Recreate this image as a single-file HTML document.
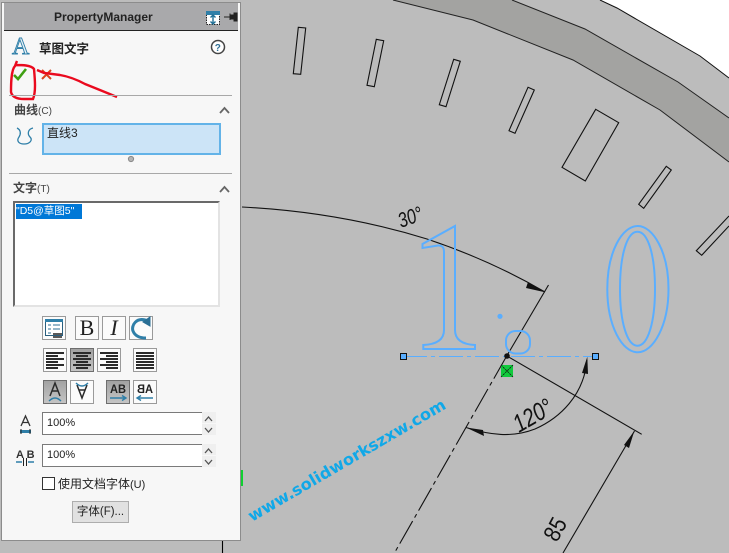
<!DOCTYPE html>
<html><head><meta charset="utf-8"><style>
html,body{margin:0;padding:0;width:729px;height:553px;overflow:hidden;background:#bcbcbc}
body{position:relative;font-family:"Liberation Sans","Noto Sans CJK SC",sans-serif;color:#222}
.a{position:absolute;white-space:nowrap}
.btn{position:absolute;box-sizing:border-box;width:24px;height:24px;border:1px solid #9a9a9a;background:#fbfbfb}
.on{background:linear-gradient(#a2a2a2,#c4c4c4);border-color:#6e6e6e}
.inp{position:absolute;left:42px;width:160px;height:23px;box-sizing:border-box;border:1px solid #7a7a7a;border-right:0;background:#fff;font-size:11px;line-height:21px;padding-left:4px}
.spin{position:absolute;left:202px;width:14px;height:11px;background:#efefef}
</style></head><body>
<svg class="a" style="left:0;top:0" width="729" height="553" viewBox="0 0 729 553">
<polygon points="600,0 617,8 700,56 729,78 729,0" fill="#fff"/>
<polyline points="600,0 617,8 700,56 729,78" fill="none" stroke="#111" stroke-width="1"/>
<polygon points="393,0 473,20 573,60 660,110 729,162 729,118 678,82 585,29 512,0" fill="#a3a3a1"/>
<polyline points="393,0 473,20 573,60 660,110 729,162" fill="none" stroke="#222" stroke-width="1"/>
<polyline points="512,0 585,29 678,82 729,118" fill="none" stroke="#222" stroke-width="1"/>
<g fill="none" stroke="#111" stroke-width="1.1">
<polygon points="298.3,27.3 305.7,28 300.7,74.3 293.3,73.7"/>
<polygon points="376.3,39.3 383.7,40.7 374.3,86.7 367,85.3"/>
<polygon points="453.7,59.3 460.3,61.3 446,106.7 439.3,104.7"/>
<polygon points="528,87.3 534.3,90 515,133.3 509,130.7"/>
<polygon points="595.7,109.3 618.7,122.7 585.3,181 562,167.3"/>
<polygon points="666.3,166.3 671.3,170 643.7,208.3 638.7,204.3"/>
<polyline points="729,216 696.3,250.7 701.7,255.3 729,226"/>
<path d="M242,207 Q340,212 427,239 Q490,260 545,292"/>
<path d="M548.5,285 L506.7,356"/>
<path d="M507,356 L641.7,434.3"/>
<path d="M587,360 C584,395 560,418 535,429 C512,438 490,435 466,427.5"/>
<path d="M634.5,431 L563,553"/>
<path d="M506.7,356 L395,552" stroke-dasharray="26 4 4 4"/>
<path d="M222.5,540 V553" stroke="#000"/>
</g>
<polygon points="545,292.3 528,282 526,288" fill="#111"/>
<polygon points="587.3,356.7 582,373 588,374" fill="#111"/>
<polygon points="466,427.5 483,430 484,436" fill="#111"/>
<polygon points="634.3,431 624,445 629,448" fill="#111"/>
<g fill="#111" font-family="'Liberation Sans',sans-serif">
<text transform="translate(401,228) rotate(-20) scale(.78,1)" font-size="21" font-style="italic">30°</text>
<text transform="translate(519,433) rotate(-30) scale(.8,1)" font-size="25" font-style="italic">120°</text>
<text transform="translate(557,543) rotate(-62) scale(.85,1)" font-size="24">85</text>
</g>
<g fill="none" stroke="#5aaeff" stroke-width="2">
<path d="M455,226 V330 Q455,344 475,345 V349 H423.3 V345 Q444,344 444,330 V252 Q444,245 438,245.5 L422.5,248 V244 Z"/>
<path d="M637.8,226 C653,226 668.5,252 668.5,289 C668.5,326 653,352.3 637.8,352.3 C622,352.3 607.3,326 607.3,289 C607.3,252 622,226 637.8,226 Z"/>
<path d="M637.5,231.7 C648,231.7 655,255 655,288.7 C655,322 648,345.7 637.5,345.7 C627,345.7 620,322 620,288.7 C620,255 627,231.7 637.5,231.7 Z"/>
<rect x="506" y="331" width="24" height="22.5" rx="9.5"/>
</g>
<circle cx="500" cy="316.3" r="2.6" fill="#5aaeff"/>
<path d="M403,356.5 H595" stroke="#5aaeff" stroke-width="1" stroke-dasharray="24 4 4 4" fill="none"/>
<rect x="400.5" y="353.5" width="6" height="6" fill="#5aaeff" stroke="#111"/>
<rect x="592.5" y="353.5" width="6" height="6" fill="#5aaeff" stroke="#111"/>
<circle cx="507" cy="356" r="2.8" fill="#111"/>
<rect x="501" y="365" width="12" height="12" fill="#10c93c"/>
<path d="M501,365 L513,377 M513,365 L501,377" stroke="#111" stroke-width=".8" stroke-dasharray="2 1"/>
<text transform="translate(252,522) rotate(-30.3)" font-family="'DejaVu Sans',sans-serif" font-size="16" font-weight="bold" fill="#10a8e8" textLength="226" lengthAdjust="spacingAndGlyphs">www.solidworkszxw.com</text>
<rect x="241" y="470" width="2" height="16" fill="#10d030"/>
</svg>

<div class="a" style="left:1px;top:2px;width:238px;height:537px;background:#f7f7f7;border:1px solid #8c8c8c"></div>
<div class="a" style="left:4px;top:3px;width:234px;height:27px;background:#a9a9ab;border-bottom:1px solid #222"></div>
<div class="a" style="left:54px;top:10px;font-size:12px;font-weight:bold;color:#222">PropertyManager</div>
<div class="spin" style="top:412px"></div>
<div class="spin" style="top:424px"></div>
<div class="spin" style="top:444px"></div>
<div class="spin" style="top:456px"></div>

<svg class="a" style="left:0;top:0" width="243" height="553" viewBox="0 0 243 553">
<rect x="206.5" y="11.5" width="13" height="13" fill="#fff" stroke="#222" stroke-dasharray="1.5 1"/>
<rect x="206" y="11" width="14" height="4" fill="#2f7fa8"/>
<path d="M213,15 V24 M210.5,17.5 L213,15 L215.5,17.5 M210.5,21.5 L213,24 L215.5,21.5" stroke="#1f6f95" stroke-width="1.4" fill="none"/>
<path d="M224,17 H230 M230,13.5 V20 M230,15 H234 V13 L237,13 V21 L234,21 V19 H230" fill="#222" stroke="#222"/>
<!-- A icon -->
<text x="12" y="54" font-family="'Liberation Serif',serif" font-size="24" fill="#e8f1f6" stroke="#2f7fa8" stroke-width=".9">A</text>
<!-- help -->
<circle cx="218" cy="47" r="6.5" fill="#fff" stroke="#444" stroke-width="1.5"/>
<text x="214.7" y="51" font-family="'Liberation Sans',sans-serif" font-size="10" font-weight="bold" fill="#2f6f95">?</text>
<!-- check, x -->
<path d="M14,75 L18,79 L26,69" stroke="#3f9f12" stroke-width="2.6" fill="none"/>
<path d="M42,70 L51,79 M51,70 L42,79" stroke="#d9441c" stroke-width="2" fill="none"/>
<path d="M17,61 L15,66 C11,70 11,85 11,92 C12,97 17,99 24,99 L33,99 C36,92 35,80 34,69 C31,65 22,65 15,65" stroke="#ea0a1e" stroke-width="2.4" fill="none"/>
<path d="M37,70 L44,73 L60,75 Q72,77 85,84 Q100,90 117,97" stroke="#ea0a1e" stroke-width="2.4" fill="none"/>
<!-- separators -->
<path d="M9,95.5 H232 M9,173.5 H232" stroke="#a8a8a8"/>
<path d="M220,113 L224.5,108 L229,113 M220,192 L224.5,187 L229,192" stroke="#666" stroke-width="1.8" fill="none"/>
<!-- curve icon -->
<path d="M17,128 C21,130 21,134 19,137 C16,141 19,144 24,144 C30,144 33,140 30,137 C27,134 28,129 33,128" stroke="#2f7fa8" stroke-width="1.3" fill="none"/>
<circle cx="131" cy="159" r="2.6" fill="#b4b4b4" stroke="#8a8a8a"/>
</svg>

<div class="a" style="left:39px;top:38px;font-size:12.5px;font-weight:bold;color:#222">草图文字</div>
<div class="a" style="left:14px;top:101px;font-size:12px;font-weight:bold;color:#444">曲线<span style="font-weight:normal;font-size:10px">(C)</span></div>
<div class="a" style="left:42px;top:123px;width:175px;height:28px;background:#cce4f7;border:2px solid #63b3e8"></div>
<div class="a" style="left:47px;top:124px;font-size:12px;color:#222">直线3</div>
<div class="a" style="left:13px;top:179px;font-size:12px;font-weight:bold;color:#444">文字<span style="font-weight:normal;font-size:10px">(T)</span></div>
<div class="a" style="left:13px;top:201px;width:203px;height:102px;background:#fff;border:2px solid;border-color:#696969 #e3e3e3 #e3e3e3 #696969"></div>
<div class="a" style="left:16px;top:204px;width:66px;height:15px;background:#0078d7;color:#fff;font-size:10.5px;line-height:15px">"D5@草图5"</div>

<div class="btn" style="left:42px;top:316px"></div>
<div class="btn" style="left:75px;top:316px;font:22px/22px 'Liberation Serif',serif;text-align:center">B</div>
<div class="btn" style="left:102px;top:316px;font:italic 22px/22px 'Liberation Serif',serif;text-align:center">I</div>
<div class="btn" style="left:129px;top:316px"></div>
<div class="btn" style="left:43px;top:348px"></div>
<div class="btn on" style="left:70px;top:348px"></div>
<div class="btn" style="left:97px;top:348px"></div>
<div class="btn" style="left:133px;top:348px"></div>
<div class="btn on" style="left:43px;top:380px"></div>
<div class="btn" style="left:70px;top:380px"></div>
<div class="btn on" style="left:106px;top:380px"></div>
<div class="btn" style="left:133px;top:380px"></div>

<svg class="a" style="left:0;top:0" width="243" height="553" viewBox="0 0 243 553">
<rect x="45.5" y="319.5" width="17" height="16" fill="#fff" stroke="#2a5f7e"/>
<rect x="45" y="319" width="18" height="3" fill="#2f7fa8"/>
<path d="M48,325 H51 M53,325 H60 M48,329 H51 M53,329 H60 M48,333 H51" stroke="#2f6f95"/>
<path d="M53,334 H62 M53,337 H62" stroke="#222" stroke-width="1.4"/>
<path d="M148,321 C136,316 131,326 133,331 C135,336 140,338 146,338" stroke="#2f7fa8" stroke-width="3" fill="none"/>
<path d="M143,322 L150,317 V326 Z" fill="#2a6f95" stroke="#2a6f95"/>
<g stroke="#2b2b2b" stroke-width="2">
<path d="M46,353 H64 M46,356 H58 M46,359 H64 M46,362 H58 M46,365 H64 M46,368 H58"/>
<path d="M73,353 H91 M76,356 H88 M73,359 H91 M76,362 H88 M73,365 H91 M76,368 H88"/>
<path d="M100,353 H118 M106,356 H118 M100,359 H118 M106,362 H118 M100,365 H118 M106,368 H118"/>
<path d="M136,353 H154 M136,356 H154 M136,359 H154 M136,362 H154 M136,365 H154 M136,368 H154"/>
</g>
<g fill="none" stroke="#2b2b2b" stroke-width="1.5">
<path d="M50,396 L55,383 L60,396 M52,391 H58"/>
<path d="M77,385 L82,398 L87,385 M79,390 H85"/>
</g>
<path d="M49,401 Q55,395 61,401" stroke="#2f7fa8" stroke-width="1.4" fill="none"/>
<path d="M76,383 Q82,389 88,383" stroke="#2f7fa8" stroke-width="1.4" fill="none"/>
<text x="110" y="393" font-family="'Liberation Sans',sans-serif" font-size="12" font-weight="bold" fill="#222" textLength="16" lengthAdjust="spacingAndGlyphs">AB</text>
<text transform="translate(153,393) scale(-1,1)" font-family="'Liberation Sans',sans-serif" font-size="12" font-weight="bold" fill="#222" textLength="16" lengthAdjust="spacingAndGlyphs">AB</text>
<path d="M110,398 H125 M122,395.5 L126,398 L122,400.5" stroke="#2f7fa8" stroke-width="1.4" fill="none"/>
<path d="M153,398 H138 M141,395.5 L137,398 L141,400.5" stroke="#2f7fa8" stroke-width="1.4" fill="none"/>
<!-- width icons -->
<path d="M21,426 L25.5,416 L30,426 M23,422.5 H28" stroke="#333" stroke-width="1.3" fill="none"/>
<path d="M20,431.5 H31" stroke="#2f7fa8" stroke-width="3"/>
<path d="M21,429 V434 M30,429 V434" stroke="#222"/>
<text x="16" y="458" font-family="'Liberation Sans',sans-serif" font-size="11" font-weight="bold" fill="#333">A B</text>
<path d="M16,462 H22 M28,462 H34" stroke="#2f7fa8" stroke-width="1.4"/>
<path d="M23.5,458 V466 M26.5,458 V466" stroke="#222"/>
<g fill="none" stroke="#555" stroke-width="1.3">
<path d="M205,421 L208.5,417 L212,421 M205,428 L208.5,432 L212,428"/>
<path d="M205,453 L208.5,449 L212,453 M205,460 L208.5,464 L212,460"/>
</g>
</svg>

<div class="inp" style="top:412px">100%</div>
<div class="inp" style="top:444px">100%</div>
<div class="a" style="left:42px;top:477px;width:11px;height:11px;background:#fff;border:1px solid #333"></div>
<div class="a" style="left:58px;top:475px;font-size:12px;color:#222">使用文档字体<span style="font-size:11px">(U)</span></div>
<div class="a" style="left:72px;top:501px;width:55px;height:20px;background:#e1e1e1;border:1px solid #adadad;font-size:11.5px;line-height:20px;text-align:center;color:#222">字体(F)...</div>
</body></html>
